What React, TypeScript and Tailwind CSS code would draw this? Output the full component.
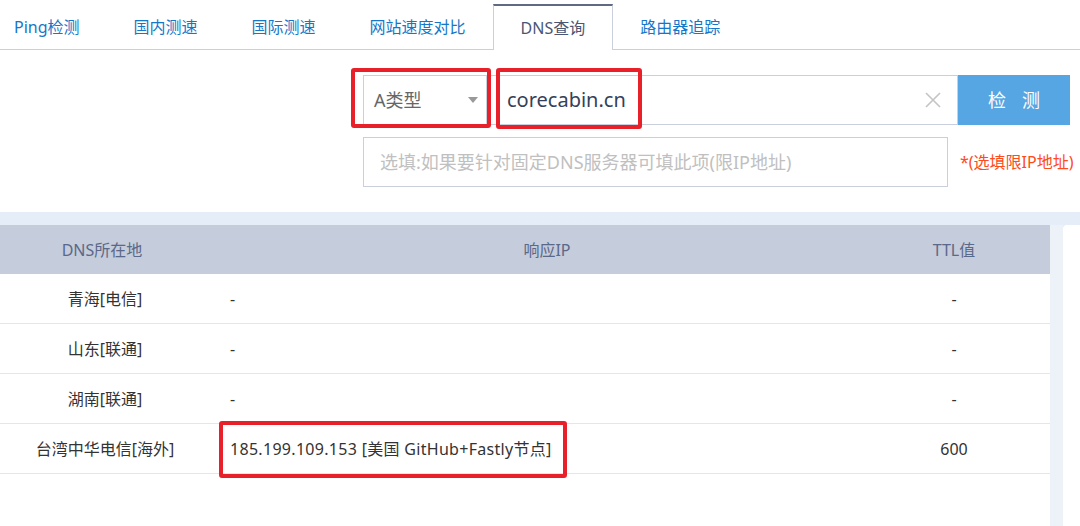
const tabs = ['Ping检测', '国内测速', '国际测速', '网站速度对比', 'DNS查询', '路由器追踪'];

const rows = [
  { loc: '青海[电信]', ip: '-', ttl: '-' },
  { loc: '山东[联通]', ip: '-', ttl: '-' },
  { loc: '湖南[联通]', ip: '-', ttl: '-' },
  { loc: '台湾中华电信[海外]', ip: '185.199.109.153 [美国 GitHub+Fastly节点]', ttl: '600' },
];

const font = { fontFamily: '"Noto Sans", "Noto Sans CJK SC", sans-serif' };

export default function App() {
  return (
    <div className="relative w-[1080px] h-[526px] overflow-hidden bg-white" style={font}>
      {/* Tabs */}
      <div className="flex h-[50px] border-b border-[#c9cfdc] items-end">
        {tabs.map((t, i) => {
          const active = t === 'DNS查询';
          return (
            <div
              key={t}
              className={`h-[45px] flex items-center text-[16px] ${i === 0 ? 'pl-[14px] pr-[27px]' : 'px-[27px]'} ${
                active
                  ? 'bg-white border-t-2 border-t-[#5f6a84] border-x border-x-[#c9cfdc] text-[#4a5675] -mb-px h-[46px]'
                  : 'text-[#1677c8]'
              }`}
            >
              {t}
            </div>
          );
        })}
      </div>

      {/* Form */}
      <div className="h-[162px] pt-[25px] pl-[363px]">
        <div className="flex h-[50px]">
          <div className="w-[124px] border border-[#c9cfdc] flex items-center justify-between pl-[10px] pr-[8px] text-[18px] text-[#666]">
            <span>A类型</span>
            <span className="w-0 h-0 border-x-[5px] border-x-transparent border-t-[6px] border-t-[#999]" />
          </div>
          <div className="w-[471px] border border-l-0 border-[#c9cfdc] flex items-center justify-between pl-[20px] pr-[16px]">
            <span className="text-[20px] text-[#34405a]">corecabin.cn</span>
            <svg width="16" height="16" viewBox="0 0 16 16">
              <path d="M1 1L15 15M15 1L1 15" stroke="#c4c4c4" strokeWidth="1.6" />
            </svg>
          </div>
          <button className="w-[112px] bg-[#55a6e2] text-white text-[18px] tracking-[16px] pl-[16px]">检测</button>
        </div>
        <div className="flex items-center mt-[12px]">
          <div className="w-[585px] h-[50px] border border-[#c9cfdc] flex items-center pl-[16px] text-[18px] text-[#c0c0c0]">
            选填:如果要针对固定DNS服务器可填此项(限IP地址)
          </div>
          <span className="ml-[12px] text-[16px] text-[#ff4a1a]">*(选填限IP地址)</span>
        </div>
      </div>

      {/* Results */}
      <div className="flex h-[314px] pt-[13px] bg-gradient-to-b from-[#e5edf8] to-[#eef3f9]">
        <div className="w-[1050px] bg-white">
          <div className="grid grid-cols-[210px_648px_192px] h-[49px] bg-[#c5ccdb] text-[16px] text-[#5a6889] items-center">
            <div className="text-center pr-[6px]">DNS所在地</div>
            <div className="text-center pl-[26px]">响应IP</div>
            <div className="text-center">TTL值</div>
          </div>
          {rows.map((r) => (
            <div key={r.loc} className="grid grid-cols-[210px_648px_192px] h-[50px] border-b border-[#e6e6e6] items-center text-[16px] text-[#333]">
              <div className="text-center">{r.loc}</div>
              <div className="pl-[20px] tracking-[0.3px]">{r.ip}</div>
              <div className="text-center">{r.ttl}</div>
            </div>
          ))}
        </div>
        <div className="w-[13px] bg-[#edf2f9]" />
        <div className="flex-1 bg-white rounded-tl-[4px]" />
      </div>

      {/* Red annotations */}
      <div className="absolute left-[351px] top-[68px] w-[140px] h-[60px] border-[4px] border-[#e8202a] rounded-[3px]" />
      <div className="absolute left-[496px] top-[68px] w-[146px] h-[61px] border-[4px] border-[#e8202a] rounded-[3px]" />
      <div className="absolute left-[219px] top-[421px] w-[348px] h-[57px] border-[4px] border-[#e8202a] rounded-[3px]" />
    </div>
  );
}
